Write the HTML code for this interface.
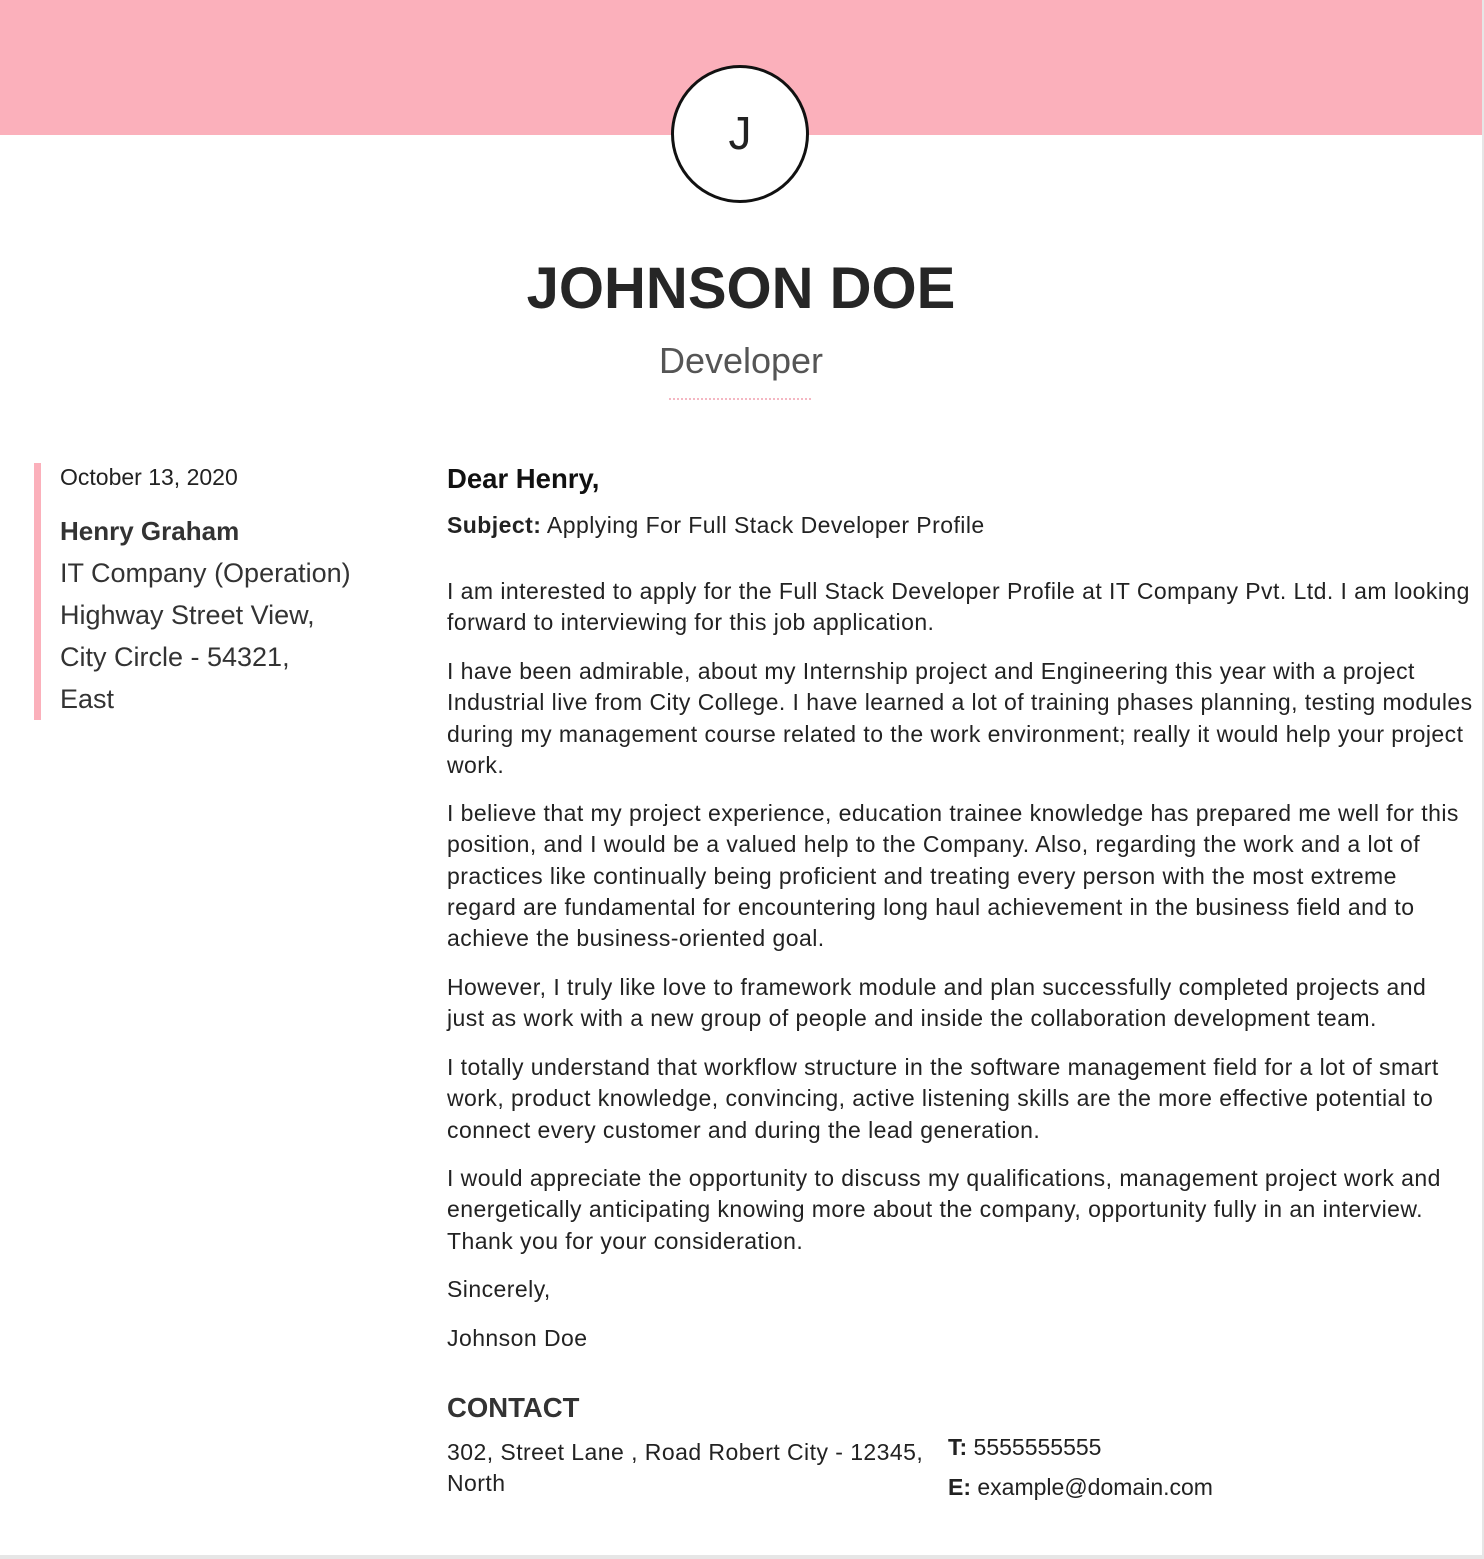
<!DOCTYPE html>
<html><head><meta charset="utf-8"><style>
*{margin:0;padding:0;box-sizing:border-box}
body{width:1484px;height:1559px;background:#e6e6e6;font-family:"Liberation Sans",Arial,sans-serif;color:#222;position:relative;overflow:hidden}
.page{position:absolute;left:0;top:0;width:1482px;height:1555px;background:#fff}
.hdr{position:absolute;left:0;top:0;width:1482px;height:135px;background:#fbb0bb}
.circ{position:absolute;left:671px;top:65px;width:138px;height:138px;border:3px solid #111;border-radius:50%;background:#fff;text-align:center;line-height:130px;font-size:46px;color:#222}
.a{position:absolute;white-space:nowrap}
.name{left:0;width:1482px;text-align:center;top:255px;font-size:58px;font-weight:bold;color:#262626}
.role{left:0;width:1482px;text-align:center;top:340px;font-size:36px;color:#555;font-weight:300}
.ul{left:669px;top:398px;width:142px;border-top:2px dotted #f4b7c2}
.bar{position:absolute;left:34px;top:463px;width:7px;height:257px;background:#fbb0bb}
.l{left:60px;font-size:27px;color:#333;line-height:42px}
.r{left:447px;font-size:23px;letter-spacing:0.45px;color:#222;line-height:31.3px}
</style></head><body><div class="page">
<div class="hdr"></div>
<div class="circ">J</div>
<div class="a name">JOHNSON DOE</div>
<div class="a role">Developer</div>
<div class="a ul"></div>
<div class="bar"></div>
<div class="a l" style="top:463px;font-size:23px;line-height:28px;color:#222">October 13, 2020</div>
<div class="a l" style="top:510px;font-weight:bold;font-size:26px;line-height:42px">Henry Graham</div>
<div class="a l" style="top:552px">IT Company (Operation)<br>Highway Street View,<br>City Circle - 54321,<br>East</div>
<div class="a" style="left:447px;top:463px;font-size:27.5px;font-weight:bold;color:#111">Dear Henry,</div>
<div class="a r" style="top:510px"><b>Subject:</b> Applying For Full Stack Developer Profile</div>
<div class="a r" style="top:576px">I am interested to apply for the Full Stack Developer Profile at IT Company Pvt. Ltd. I am looking<br>forward to interviewing for this job application.</div>
<div class="a r" style="top:656px">I have been admirable, about my Internship project and Engineering this year with a project<br>Industrial live from City College. I have learned a lot of training phases planning, testing modules<br>during my management course related to the work environment; really it would help your project<br>work.</div>
<div class="a r" style="top:798px">I believe that my project experience, education trainee knowledge has prepared me well for this<br>position, and I would be a valued help to the Company. Also, regarding the work and a lot of<br>practices like continually being proficient and treating every person with the most extreme<br>regard are fundamental for encountering long haul achievement in the business field and to<br>achieve the business-oriented goal.</div>
<div class="a r" style="top:972px">However, I truly like love to framework module and plan successfully completed projects and<br>just as work with a new group of people and inside the collaboration development team.</div>
<div class="a r" style="top:1052px">I totally understand that workflow structure in the software management field for a lot of smart<br>work, product knowledge, convincing, active listening skills are the more effective potential to<br>connect every customer and during the lead generation.</div>
<div class="a r" style="top:1163px">I would appreciate the opportunity to discuss my qualifications, management project work and<br>energetically anticipating knowing more about the company, opportunity fully in an interview.<br>Thank you for your consideration.</div>
<div class="a r" style="top:1274px">Sincerely,</div>
<div class="a r" style="top:1323px">Johnson Doe</div>
<div class="a" style="left:447px;top:1392px;font-size:27.5px;font-weight:bold;color:#333">CONTACT</div>
<div class="a r" style="top:1437px">302, Street Lane , Road Robert City - 12345,<br>North</div>
<div class="a" style="left:948px;top:1427px;font-size:23px;line-height:40px;color:#222"><b>T:</b> 5555555555<br><b>E:</b> example@domain.com</div>
</div></body></html>
